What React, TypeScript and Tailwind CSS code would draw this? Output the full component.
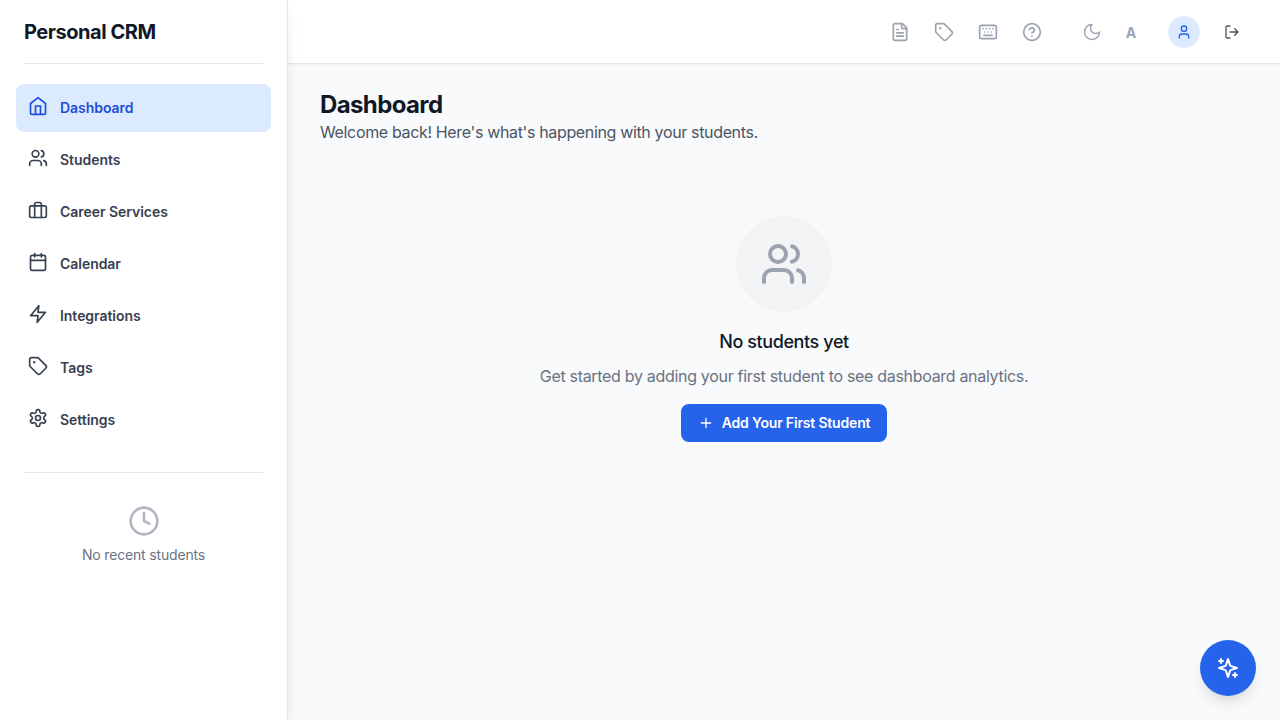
import type { ReactNode } from 'react';

type IconProps = { className?: string; children: ReactNode; width?: number };

function Icon({ className = '', children, width = 2 }: IconProps) {
  return (
    <svg viewBox="0 0 24 24" fill="none" stroke="currentColor" strokeWidth={width} strokeLinecap="round" strokeLinejoin="round" className={`shrink-0 ${className}`}>
      {children}
    </svg>
  );
}

const home = (
  <>
    <path d="m3 9 9-7 9 7v11a2 2 0 0 1-2 2H5a2 2 0 0 1-2-2z" />
    <path d="M9 22V12h6v10" />
  </>
);
const users = (
  <>
    <path d="M16 21v-2a4 4 0 0 0-4-4H6a4 4 0 0 0-4 4v2" />
    <circle cx="9" cy="7" r="4" />
    <path d="M22 21v-2a4 4 0 0 0-3-3.87" />
    <path d="M16 3.13a4 4 0 0 1 0 7.75" />
  </>
);
const briefcase = (
  <>
    <rect x="2" y="7" width="20" height="14" rx="2" />
    <path d="M16 21V5a2 2 0 0 0-2-2h-4a2 2 0 0 0-2 2v16" />
  </>
);
const calendar = (
  <>
    <rect x="3" y="4" width="18" height="18" rx="2" />
    <path d="M8 2v4M16 2v4M3 10h18" />
  </>
);
const zap = <path d="M13 2 3 14h9l-1 8 10-12h-9l1-8z" />;
const tag = (
  <>
    <path d="M12.586 2.586A2 2 0 0 0 11.172 2H4a2 2 0 0 0-2 2v7.172a2 2 0 0 0 .586 1.414l8.704 8.704a2.426 2.426 0 0 0 3.42 0l6.58-6.58a2.426 2.426 0 0 0 0-3.42z" />
    <circle cx="7.5" cy="7.5" r=".5" fill="currentColor" />
  </>
);
const settings = (
  <>
    <path d="M12.22 2h-.44a2 2 0 0 0-2 2v.18a2 2 0 0 1-1 1.73l-.43.25a2 2 0 0 1-2 0l-.15-.08a2 2 0 0 0-2.73.73l-.22.38a2 2 0 0 0 .73 2.73l.15.1a2 2 0 0 1 1 1.72v.51a2 2 0 0 1-1 1.74l-.15.09a2 2 0 0 0-.73 2.73l.22.38a2 2 0 0 0 2.73.73l.15-.08a2 2 0 0 1 2 0l.43.25a2 2 0 0 1 1 1.73V20a2 2 0 0 0 2 2h.44a2 2 0 0 0 2-2v-.18a2 2 0 0 1 1-1.73l.43-.25a2 2 0 0 1 2 0l.15.08a2 2 0 0 0 2.73-.73l.22-.39a2 2 0 0 0-.73-2.73l-.15-.08a2 2 0 0 1-1-1.74v-.5a2 2 0 0 1 1-1.74l.15-.09a2 2 0 0 0 .73-2.73l-.22-.38a2 2 0 0 0-2.73-.73l-.15.08a2 2 0 0 1-2 0l-.43-.25a2 2 0 0 1-1-1.73V4a2 2 0 0 0-2-2z" />
    <circle cx="12" cy="12" r="3" />
  </>
);

const navItems = [
  { label: 'Dashboard', icon: home, active: true },
  { label: 'Students', icon: users },
  { label: 'Career Services', icon: briefcase },
  { label: 'Calendar', icon: calendar },
  { label: 'Integrations', icon: zap },
  { label: 'Tags', icon: tag },
  { label: 'Settings', icon: settings },
];

const toolbar = [
  {
    name: 'Notes',
    icon: (
      <>
        <path d="M15 2H6a2 2 0 0 0-2 2v16a2 2 0 0 0 2 2h12a2 2 0 0 0 2-2V7Z" />
        <path d="M14 2v4a2 2 0 0 0 2 2h4M10 9H8M16 13H8M16 17H8" />
      </>
    ),
  },
  { name: 'Tags', icon: tag },
  {
    name: 'Keyboard shortcuts',
    icon: (
      <>
        <rect x="2" y="4" width="20" height="16" rx="2" />
        <path d="M6 8h.01M10 8h.01M14 8h.01M18 8h.01M8 12h.01M12 12h.01M16 12h.01M7 16h10" />
      </>
    ),
  },
  {
    name: 'Help',
    icon: (
      <>
        <circle cx="12" cy="12" r="10" />
        <path d="M9.09 9a3 3 0 0 1 5.83 1c0 2-3 3-3 3M12 17h.01" />
      </>
    ),
  },
];

function Sidebar() {
  return (
    <aside className="z-10 flex w-72 shrink-0 flex-col border-r border-gray-200 bg-white shadow-lg">
      <div className="mx-6 flex h-16 items-center border-b border-gray-200">
        <h1 className="text-xl font-bold tracking-[-0.45px] text-gray-900">Personal CRM</h1>
      </div>
      <nav className="mt-5 flex flex-col gap-1 px-4">
        {navItems.map(({ label, icon, active }) => (
          <a key={label} className={`flex h-12 items-center rounded-lg px-3 text-sm font-semibold ${active ? 'bg-[#dbeafe] text-[#1d4ed8]' : 'text-[#374151]'}`}>
            <Icon className="mr-3 mb-1 size-5">{icon}</Icon>
            <span className="tracking-[-0.04px]">{label}</span>
          </a>
        ))}
      </nav>
      <div className="mx-6 mt-7 flex flex-col items-center border-t border-gray-200 pt-8">
        <Icon className="size-8 text-[#b2b6c0]">
          <circle cx="12" cy="12" r="10" />
          <path d="M12 6v6l4 2" />
        </Icon>
        <p className="mt-2 text-sm tracking-[-0.17px] text-gray-500">No recent students</p>
      </div>
    </aside>
  );
}

function Header() {
  return (
    <header className="flex h-16 shrink-0 items-center justify-end border-b border-gray-200 bg-white pr-8 text-[#9ca3af] shadow-[0_1px_2px_rgba(0,0,0,0.05)]">
      <div className="flex gap-2">
        {toolbar.map(({ name, icon }) => (
          <button key={name} aria-label={name} className="p-2">
            <Icon className="size-5">{icon}</Icon>
          </button>
        ))}
      </div>
      <button aria-label="Theme" className="ml-6 p-2">
        <Icon className="size-5" width={1.75}>
          <path d="M12 3a6 6 0 0 0 9 9 9 9 0 1 1-9-9Z" />
        </Icon>
      </button>
      <button className="ml-2 w-[26px] pt-0.5 text-center text-sm font-bold">A</button>
      <button aria-label="Profile" className="ml-6 flex size-8 items-center justify-center rounded-full bg-[#dbeafe] text-[#2563eb]">
        <Icon className="size-4">
          <path d="M19 21v-2a4 4 0 0 0-4-4H9a4 4 0 0 0-4 4v2" />
          <circle cx="12" cy="7" r="4" />
        </Icon>
      </button>
      <button aria-label="Sign out" className="ml-4 p-2 text-[#4b5563]">
        <Icon className="size-4">
          <path d="M9 21H5a2 2 0 0 1-2-2V5a2 2 0 0 1 2-2h4M16 17l5-5-5-5M21 12H9" />
        </Icon>
      </button>
    </header>
  );
}

export default function App() {
  return (
    <div className="relative flex h-screen overflow-hidden bg-[#f9fafb] font-['Inter',sans-serif]">
      <Sidebar />
      <div className="flex min-w-0 flex-1 flex-col">
        <Header />
        <main className="flex-1 px-8 pt-[25px]">
          <h2 className="text-2xl leading-[31px] font-bold tracking-[-0.62px] text-gray-900">Dashboard</h2>
          <p className="text-base tracking-[-0.35px] text-gray-600">Welcome back! Here's what's happening with your students.</p>
          <section className="mt-[72px] flex flex-col items-center">
            <div className="flex size-24 items-center justify-center rounded-full bg-[#f3f4f6] text-[#9ca3af]">
              <Icon className="size-12">{users}</Icon>
            </div>
            <h3 className="mt-4 text-lg font-medium tracking-[-0.4px] text-gray-900">No students yet</h3>
            <p className="mt-2 text-base tracking-[-0.31px] text-gray-500">Get started by adding your first student to see dashboard analytics.</p>
            <button className="mt-4 flex h-[38px] w-[206px] items-center justify-center rounded-lg bg-[#2563eb] text-sm font-semibold text-white">
              <Icon className="mr-2 size-4">
                <path d="M5 12h14M12 5v14" />
              </Icon>
              <span className="tracking-[-0.18px]">Add Your First Student</span>
            </button>
          </section>
        </main>
      </div>
      <button aria-label="Assistant" className="absolute right-6 bottom-6 flex size-14 items-center justify-center rounded-full bg-[#2563eb] text-white shadow-lg">
        <Icon className="size-6">
          <path d="m12 3-1.912 5.813a2 2 0 0 1-1.275 1.275L3 12l5.813 1.912a2 2 0 0 1 1.275 1.275L12 21l1.912-5.813a2 2 0 0 1 1.275-1.275L21 12l-5.813-1.912a2 2 0 0 1-1.275-1.275L12 3Z" />
          <path d="M5 3v4M19 17v4M3 5h4M17 19h4" />
        </Icon>
      </button>
    </div>
  );
}
